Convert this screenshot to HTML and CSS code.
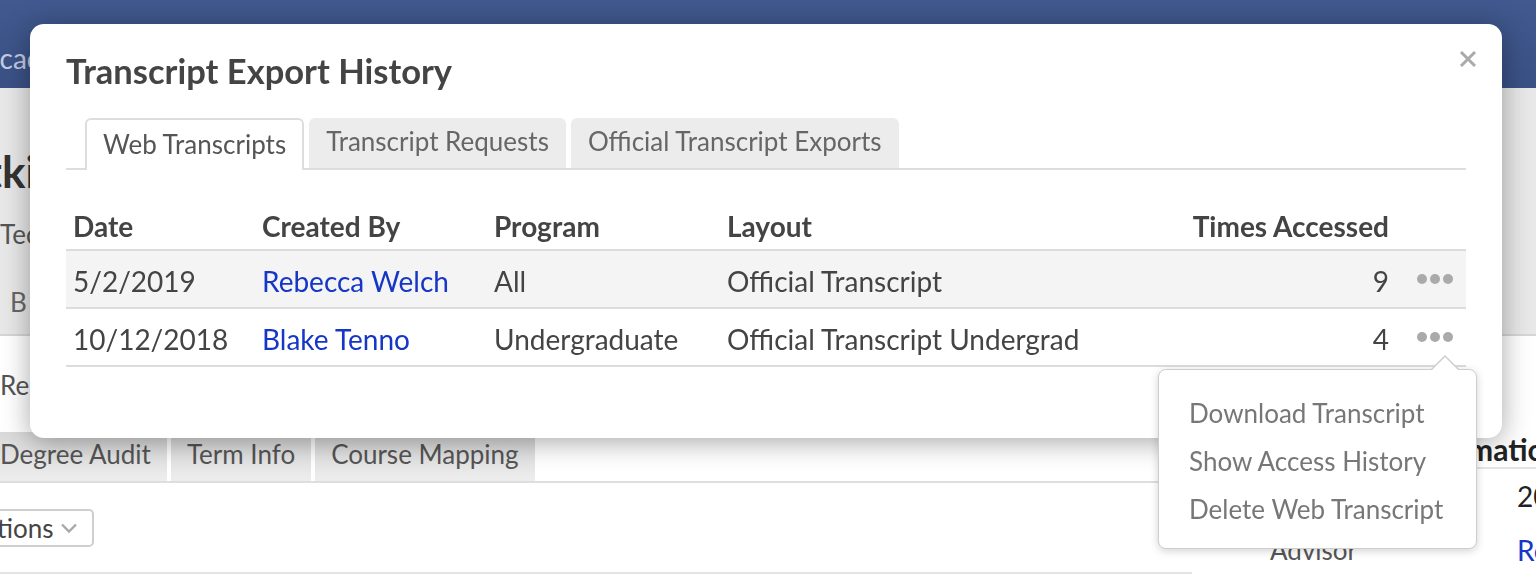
FILE: index.html
```html
<!DOCTYPE html>
<html lang="en">
<head>
<meta charset="utf-8">
<title>Transcript Export History</title>
<link rel="stylesheet" href="styles.css">
</head>
<body>
<div class="page">
  <header class="topbar">
    <nav class="nav"><span class="nav-item">Academics</span></nav>
  </header>
  <section class="band">
    <h1 class="student-name">Watkins, Mary</h1>
    <div class="student-sub">Technology Program</div>
    <div class="band-tabs"><span class="band-tab">Bio</span></div>
  </section>
  <div class="records-label">Records</div>
  <div class="content">
    <main class="main">
      <div class="page-tabs">
        <span class="page-tab">Degree Audit</span>
        <span class="page-tab">Term Info</span>
        <span class="page-tab">Course Mapping</span>
      </div>
      <div class="toolbar">
        <button class="options">Options
          <svg class="chev" width="18" height="12" viewBox="0 0 18 12"><path d="M2 2.5l7 7 7-7" fill="none" stroke="#a8a8a8" stroke-width="2.4"/></svg>
        </button>
      </div>
      <div class="main-rule"></div>
    </main>
    <aside class="aside">
      <h2 class="aside-title">Information</h2>
      <div class="aside-row"><span class="aside-label">Entry Term</span><span class="aside-value">2018</span></div>
      <div class="aside-row"><span class="aside-label">Advisor</span><span class="aside-value link">Rebecca Welch</span></div>
    </aside>
  </div>
</div>

<div class="modal" role="dialog" aria-label="Transcript Export History">
  <button class="close" aria-label="Close">
    <svg width="18" height="18" viewBox="0 0 18 18"><path d="M2 2L16 16M16 2L2 16" stroke="#aaa" stroke-width="3"/></svg>
  </button>
  <h2 class="modal-title">Transcript Export History</h2>
  <div class="tabs">
    <span class="tab active">Web Transcripts</span>
    <span class="tab">Transcript Requests</span>
    <span class="tab">Official Transcript Exports</span>
  </div>
  <table class="grid">
    <colgroup>
      <col class="c-date"><col class="c-by"><col class="c-prog"><col class="c-layout"><col class="c-times"><col class="c-menu">
    </colgroup>
    <thead>
      <tr><th>Date</th><th>Created By</th><th>Program</th><th>Layout</th><th class="num">Times Accessed</th><th></th></tr>
    </thead>
    <tbody>
      <tr class="alt">
        <td>5/2/2019</td><td><a class="link">Rebecca Welch</a></td><td>All</td><td>Official Transcript</td><td class="num">9</td>
        <td class="menu-cell"><span class="dots"><i></i><i></i><i></i></span></td>
      </tr>
      <tr>
        <td>10/12/2018</td><td><a class="link">Blake Tenno</a></td><td>Undergraduate</td><td>Official Transcript Undergrad</td><td class="num">4</td>
        <td class="menu-cell"><span class="dots"><i></i><i></i><i></i></span></td>
      </tr>
    </tbody>
  </table>
</div>

<div class="popover">
  <div class="popover-item">Download Transcript</div>
  <div class="popover-item">Show Access History</div>
  <div class="popover-item">Delete Web Transcript</div>
</div>
</body>
</html>
```
FILE: styles.css
```css
html, body {
  margin: 0;
  padding: 0;
  height: 582px;
  overflow: hidden;
  background: #fff;
  font-family: Lato, "Open Sans", "Liberation Sans", sans-serif;
  color: #444;
}

.page {
  width: 1536px;
  overflow: hidden;
}

.topbar {
  height: 88px;
  background: linear-gradient(#41598f, #3a5185);
  display: flex;
  align-items: center;
}

.nav-item {
  display: block;
  margin-left: -19px;
  margin-top: 28px;
  font-size: 28px;
  color: #c3cce0;
}

.band {
  height: 246px;
  background: #e8e8e8;
  border-bottom: 2px solid #d6d6d6;
  overflow: hidden;
}

.student-name {
  margin: 58px 0 0 -80px;
  font-size: 44px;
  font-weight: 700;
  color: #333;
  line-height: 50px;
  white-space: nowrap;
}

.student-sub {
  margin-top: 22px;
  font-size: 26px;
  color: #555;
  line-height: 32px;
  white-space: nowrap;
}

.band-tabs {
  margin-top: 36px;
  padding-left: 10px;
}

.band-tab {
  font-size: 26px;
  color: #666;
  line-height: 32px;
  letter-spacing: 4px;
}

.records-label {
  margin-top: 33px;
  font-size: 26px;
  color: #555;
  line-height: 32px;
}

.content {
  display: flex;
  margin-top: 31px;
}

.main {
  width: 1192px;
  flex: none;
}

.page-tabs {
  display: flex;
  gap: 4px;
  border-bottom: 2px solid #dedede;
  height: 49px;
}

.page-tab {
  display: flex;
  align-items: center;
  padding: 0 16px 6px;
  font-size: 26px;
  color: #555;
  background: linear-gradient(#d9d9d9, #ededed);
}

.page-tab:first-child {
  padding-left: 0;
  padding-right: 16px;
}

.toolbar {
  padding-top: 26px;
}

.options {
  margin-left: -54px;
  height: 38px;
  padding: 0 14px;
  border: 2px solid #cfcfcf;
  border-radius: 5px;
  background: #fff;
  font-family: inherit;
  font-size: 26px;
  color: #444;
  display: inline-flex;
  align-items: center;
  gap: 7px;
}

.chev {
  display: block;
}

.main-rule {
  margin-top: 25px;
  border-top: 2px solid #e4e4e4;
}

.aside {
  flex: none;
  width: 420px;
  padding-left: 78px;
}

.aside-title {
  margin: 0 0 0 134px;
  font-size: 30px;
  font-weight: 700;
  color: #222;
  line-height: 35px;
  white-space: nowrap;
  border-bottom: 2px solid #e4e4e4;
}

.aside-row {
  display: flex;
  height: 54px;
  align-items: center;
  font-size: 28px;
  white-space: nowrap;
}

.aside-label {
  flex: none;
  width: 247px;
  font-size: 26px;
  color: #555;
}

.aside-value {
  flex: none;
  color: #222;
}

.link {
  color: #1636c5;
  text-decoration: none;
}

/* modal */
.modal {
  position: fixed;
  left: 30px;
  top: 24px;
  width: 1472px;
  height: 414px;
  box-sizing: border-box;
  padding: 26px 36px 0;
  background: #fff;
  border-radius: 14px;
  box-shadow: 0 4px 28px rgba(0, 0, 0, 0.35);
}

.close {
  position: absolute;
  right: 25px;
  top: 26px;
  padding: 0;
  border: 0;
  background: none;
  width: 18px;
  height: 18px;
}

.close svg {
  display: block;
}

.modal-title {
  margin: 0;
  font-size: 34.5px;
  font-weight: 700;
  line-height: 41px;
  color: #444;
}

.tabs {
  display: flex;
  gap: 5px;
  margin-top: 27px;
  padding-left: 19px;
  border-bottom: 2px solid #dddddd;
  height: 50px;
}

.tab {
  display: flex;
  align-items: center;
  padding: 0 17px 4px;
  font-size: 26px;
  color: #666;
  background: #ececec;
  border-radius: 6px 6px 0 0;
}

.tab.active {
  background: #fff;
  color: #555;
  border: 2px solid #dddddd;
  border-bottom: 0;
  padding: 0 16px 2px;
  margin-bottom: -2px;
  height: 52px;
  box-sizing: border-box;
}

.grid {
  width: 100%;
  margin-top: 28px;
  border-collapse: collapse;
  table-layout: fixed;
  font-size: 28px;
}

.c-date { width: 189px; }
.c-by { width: 232px; }
.c-prog { width: 233px; }
.c-times { width: 215px; }
.c-menu { width: 70px; }

.grid th {
  text-align: left;
  font-weight: 700;
  color: #444;
  height: 47px;
  padding: 4px 7px 0;
  border-bottom: 2px solid #dcdcdc;
  vertical-align: middle;
  white-space: nowrap;
}

.grid td {
  height: 53px;
  padding: 3px 7px 0;
  border-bottom: 2px solid #dcdcdc;
  vertical-align: middle;
  white-space: nowrap;
  color: #444;
}

.grid .num {
  text-align: right;
}

.grid tr.alt td {
  background: #f4f4f4;
}

.grid td.menu-cell {
  padding: 0 7px;
  height: 56px;
}

.dots {
  display: flex;
  gap: 3px;
  margin-left: 14px;
}

.dots i {
  width: 10px;
  height: 10px;
  border-radius: 50%;
  background: #aaa;
}

/* popover */
.popover {
  position: fixed;
  left: 1158px;
  top: 369px;
  width: 319px;
  height: 180px;
  box-sizing: border-box;
  padding: 19px 0 0 30px;
  background: #fff;
  border: 1px solid #cdcdcd;
  border-radius: 8px;
  box-shadow: 0 2px 8px rgba(0, 0, 0, 0.18);
}

.popover::before,
.popover::after {
  content: "";
  position: absolute;
  left: 272px;
  width: 0;
  height: 0;
  border-left: 14px solid transparent;
  border-right: 14px solid transparent;
}

.popover::before {
  top: -15px;
  border-bottom: 14px solid #cdcdcd;
}

.popover::after {
  top: -13px;
  border-bottom: 14px solid #fff;
}

.popover-item {
  font-size: 26px;
  line-height: 48px;
  color: #777;
  white-space: nowrap;
}
```
